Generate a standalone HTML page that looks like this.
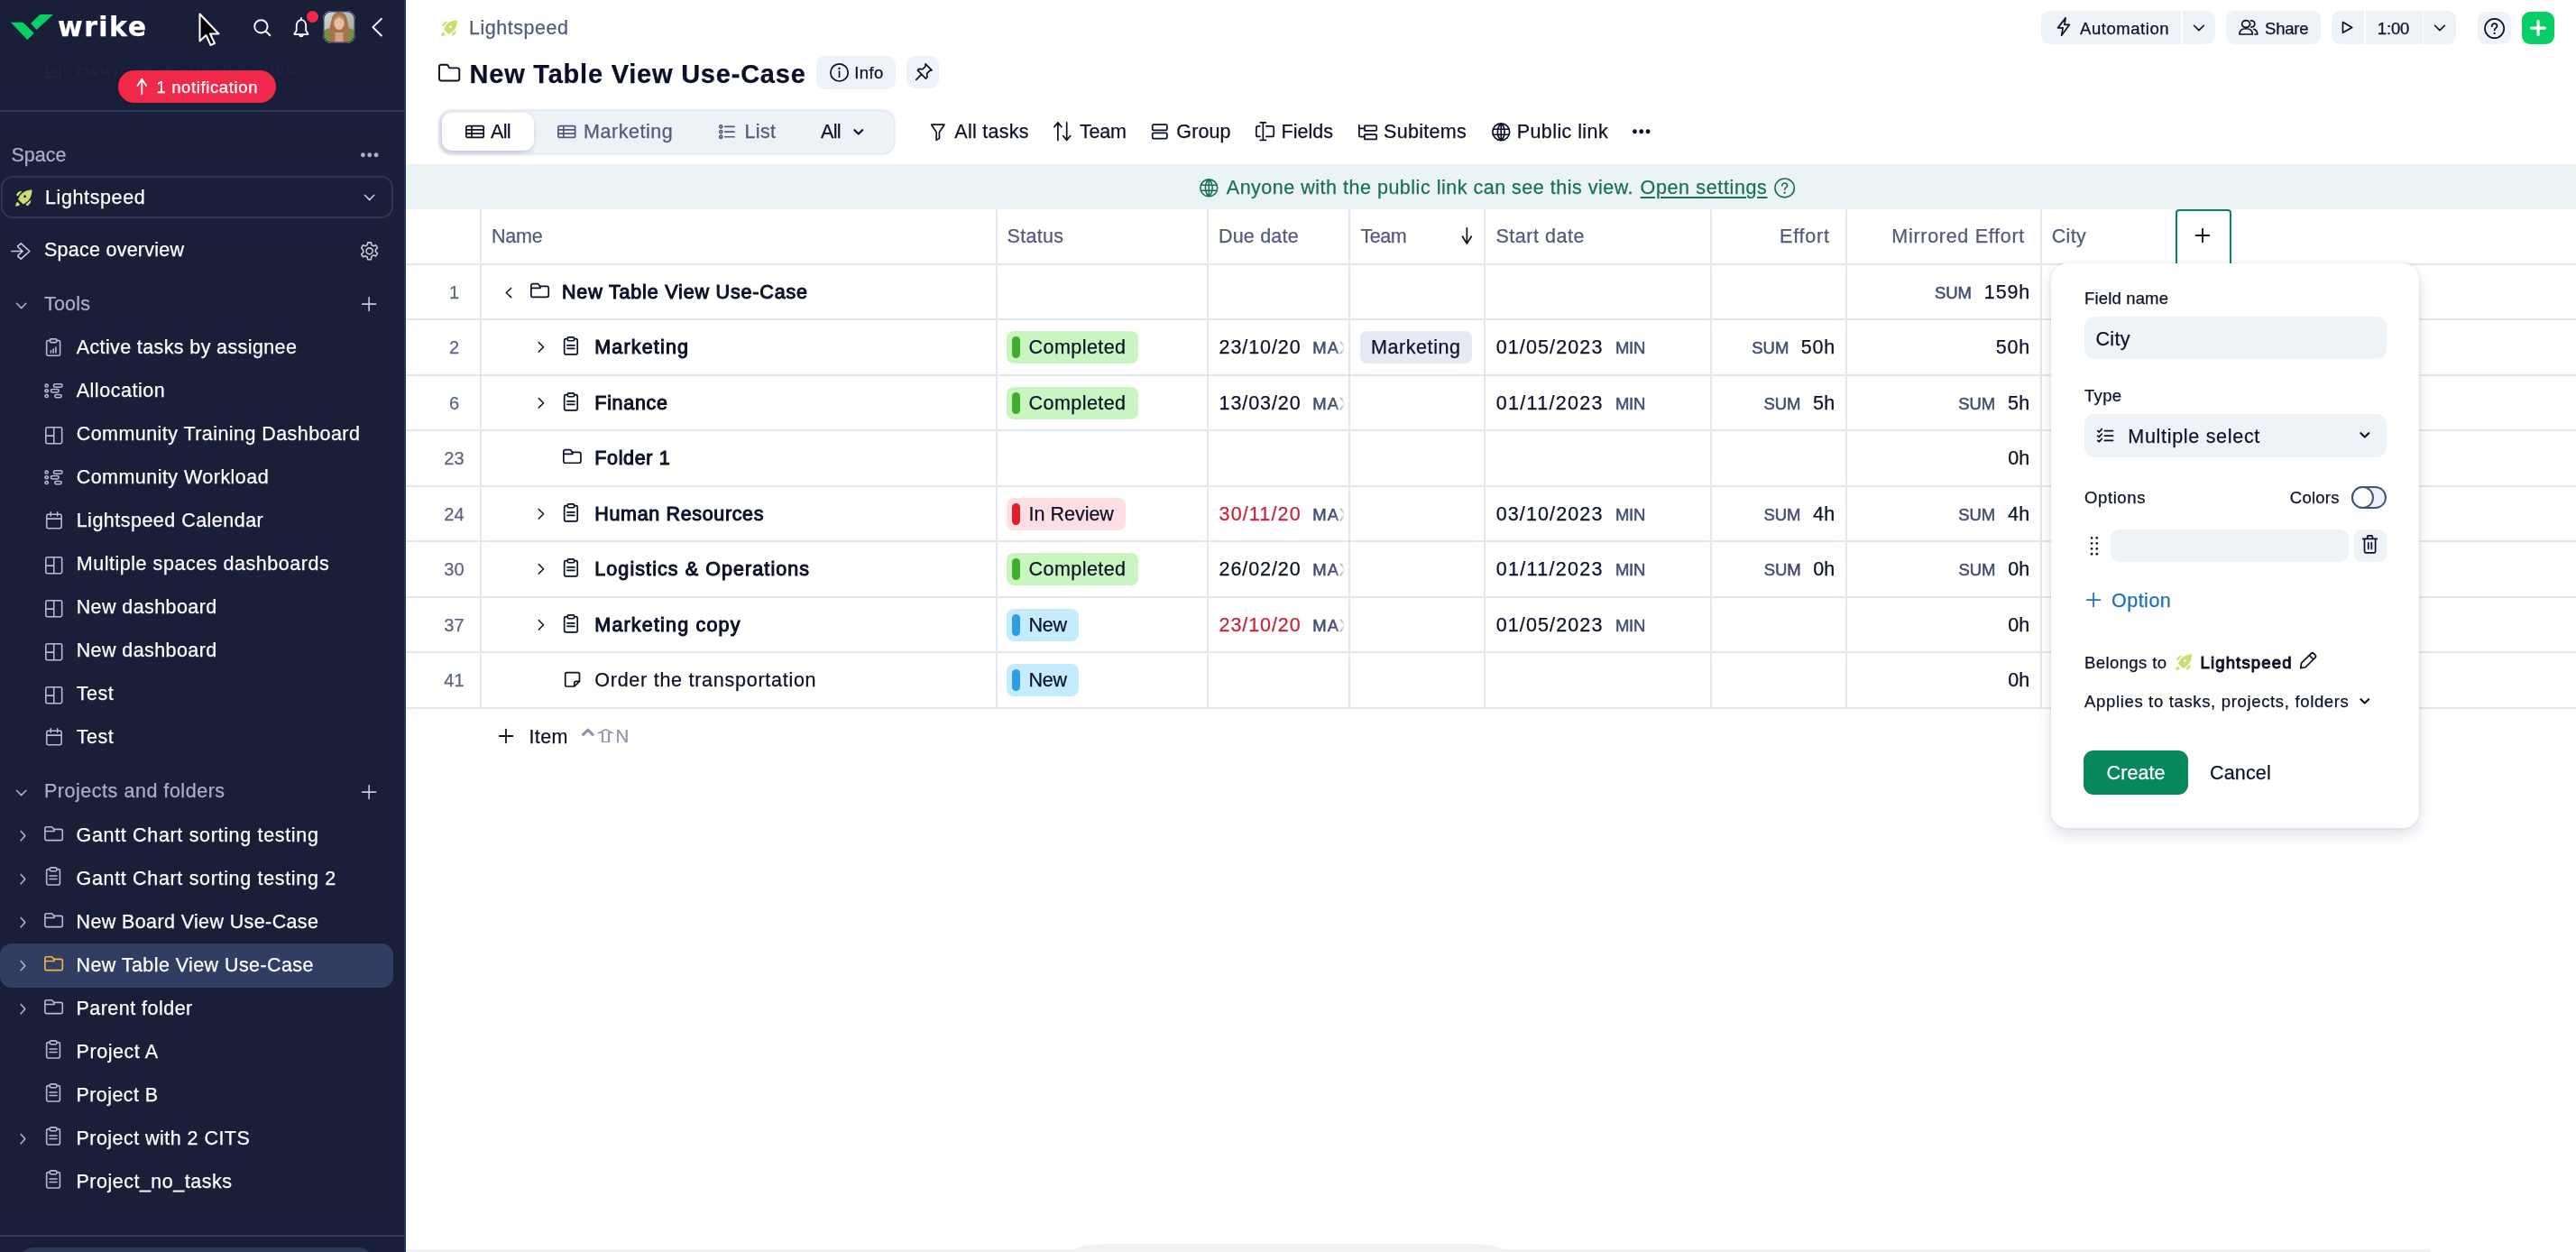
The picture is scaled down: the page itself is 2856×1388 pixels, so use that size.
<!DOCTYPE html>
<html lang="en">
<head>
<meta charset="utf-8">
<title>New Table View Use-Case - Wrike</title>
<style>
html,body{margin:0;padding:0;}
body{width:2856px;height:1388px;overflow:hidden;background:#fff;position:relative;font-family:"Liberation Sans",sans-serif;}
.main,.table,.popup,.sidebar{position:absolute;left:0;top:0;width:2856px;height:1388px;overflow:hidden;will-change:transform;}
.sidebar{width:450px;}
.sbg{position:absolute;left:0;top:0;width:450px;height:1388px;background:#191e39;}
.t{position:absolute;white-space:pre;-webkit-text-stroke-width:0.25px;}
.b{position:absolute;box-sizing:border-box;}
.i{position:absolute;overflow:visible;}
.u{text-decoration:underline;text-decoration-thickness:1.5px;text-underline-offset:3px;}

</style>
</head>
<body>
<div class="sbg"></div>
<main class="main">
<svg class="i" style="left:488.5px;top:22px;width:18.5px;height:18.5px" viewBox="0 0 24 24"><path fill-rule="evenodd" fill="#cfdd6e" d="M23.300 0.500C17 0.500 10.500 3 6.800 8.300L3.800 13.800L11 20.800L15.500 18C21 14 23.500 7 23.300 0.500ZM13.400 8a1.900 1.900 0 1 0 .01 0ZM1 7.500L4.500 3.500Q7 2 9.500 2.200L3.500 9.500ZM14.500 21L21.700 14.500Q22 17.500 20.500 20L17 23.500ZM0.300 23.700Q0.300 19 3 17.500L6.500 21Q5 23.700 0.300 23.700Z"/></svg>
<span class="t" style="left:520.0px;top:21px;font-size:21.5px;line-height:21.5px;color:#505b7b;letter-spacing:0.53px;">Lightspeed</span>
<svg class="i" style="left:485.7px;top:70.9px;width:24.3px;height:19.3px;color:#0c1129;stroke-width:1.9;" viewBox="0 0 24 24" preserveAspectRatio="none"><path d="M1 3.500Q1 1 3.500 1H8.500Q10 1 10.500 2L12 5.500H20.500Q23 5.500 23 8V20.500Q23 23 20.500 23H3.500Q1 23 1 20.500z" fill="none" stroke="currentColor" stroke-linecap="round" stroke-linejoin="round" vector-effect="non-scaling-stroke" /></svg>
<span class="t" style="left:520.5px;top:68px;font-size:29px;line-height:29px;color:#0a0f2a;letter-spacing:0.78px;font-weight:700;">New Table View Use-Case</span>
<div class="b" style="left:905.0px;top:62.0px;width:88.0px;height:37.0px;background:#eef3f7;border-radius:9px;"></div>
<svg class="i" style="left:919.5px;top:69.6px;width:21.1px;height:20.9px;color:#0c1129;stroke-width:1.7;" viewBox="0 0 24 24" preserveAspectRatio="none"><path d="M12 1a11 11 0 1 0 0 22a11 11 0 1 0 0-22zM12 10.500v7" fill="none" stroke="currentColor" stroke-linecap="round" stroke-linejoin="round" vector-effect="non-scaling-stroke" /><path d="M12 5.300a1.400 1.400 0 1 0 .01 0z" fill="currentColor" stroke="none" /></svg>
<span class="t" style="left:947.3px;top:72px;font-size:18.5px;line-height:18.5px;color:#0c1129;letter-spacing:0.38px;">Info</span>
<div class="b" style="left:1005.0px;top:62.0px;width:36.0px;height:36.0px;background:#eef3f7;border-radius:9px;"></div>
<svg class="i" style="left:1015.1px;top:69.9px;width:18.9px;height:19.1px;color:#0c1129;stroke-width:1.7;" viewBox="0 0 24 24" preserveAspectRatio="none"><path d="M14 1l9 9l-3 .5l-4 4l.500 5l-2 2L3 10l2-2l5 .500l4-4zM8.500 15.500L1 23" fill="none" stroke="currentColor" stroke-linecap="round" stroke-linejoin="round" vector-effect="non-scaling-stroke" /></svg>
<div class="b" style="left:2263.0px;top:12.0px;width:155.0px;height:36.5px;background:#eef3f7;border-radius:9px 0 0 9px;"></div>
<svg class="i" style="left:2280.8px;top:19.0px;width:14.0px;height:21.1px;color:#0c1129;stroke-width:1.7;" viewBox="0 0 24 24" preserveAspectRatio="none"><path d="M15.500 1L1 13.500h9.500L8 23L23 9.500h-9.500z" fill="none" stroke="currentColor" stroke-linecap="round" stroke-linejoin="round" vector-effect="non-scaling-stroke" /></svg>
<span class="t" style="left:2306.0px;top:23px;font-size:18.5px;line-height:18.5px;color:#0c1129;letter-spacing:0.56px;">Automation</span>
<div class="b" style="left:2420.0px;top:12.0px;width:35.5px;height:36.5px;background:#eef3f7;border-radius:0 9px 9px 0;"></div>
<svg class="i" style="left:2432.3px;top:28.1px;width:11.9px;height:5.9px;color:#0c1129;stroke-width:1.6;" viewBox="0 0 24 24" preserveAspectRatio="none"><path d="M1 1L12 23L23 1" fill="none" stroke="currentColor" stroke-linecap="round" stroke-linejoin="round" vector-effect="non-scaling-stroke" /></svg>
<div class="b" style="left:2468.0px;top:12.0px;width:104.5px;height:36.5px;background:#eef3f7;border-radius:9px;"></div>
<svg class="i" style="left:2481.9px;top:21.7px;width:21.6px;height:16.7px;color:#0c1129;stroke-width:1.7;" viewBox="0 0 24 24" preserveAspectRatio="none"><path d="M9 1a5 5.500 0 1 0 .01 0zM1 23c0-5.500 2.500-9 8-9s8 3.500 8 9zM15 1.200c3 0 4.800 2.300 4.800 5.300s-1.800 5-4.300 5.200M18.500 14.800c3 1 4.500 3.700 4.500 8.200h-3" fill="none" stroke="currentColor" stroke-linecap="round" stroke-linejoin="round" vector-effect="non-scaling-stroke" /></svg>
<span class="t" style="left:2511.0px;top:23px;font-size:18.5px;line-height:18.5px;color:#0c1129;letter-spacing:-0.19px;">Share</span>
<div class="b" style="left:2585.0px;top:12.0px;width:36.0px;height:36.5px;background:#eef3f7;border-radius:9px 0 0 9px;"></div>
<svg class="i" style="left:2597.4px;top:23.8px;width:11.2px;height:12.9px;color:#0c1129;stroke-width:1.7;" viewBox="0 0 24 24" preserveAspectRatio="none"><path d="M1 1L23 12L1 23z" fill="none" stroke="currentColor" stroke-linecap="round" stroke-linejoin="round" vector-effect="non-scaling-stroke" /></svg>
<div class="b" style="left:2623.0px;top:12.0px;width:62.5px;height:36.5px;background:#eef3f7;"></div>
<span class="t" style="left:2635.8px;top:23px;font-size:18.5px;line-height:18.5px;color:#0c1129;letter-spacing:-0.14px;">1:00</span>
<div class="b" style="left:2687.0px;top:12.0px;width:35.5px;height:36.5px;background:#eef3f7;border-radius:0 9px 9px 0;"></div>
<svg class="i" style="left:2699.3px;top:28.1px;width:11.9px;height:5.9px;color:#0c1129;stroke-width:1.6;" viewBox="0 0 24 24" preserveAspectRatio="none"><path d="M1 1L12 23L23 1" fill="none" stroke="currentColor" stroke-linecap="round" stroke-linejoin="round" vector-effect="non-scaling-stroke" /></svg>
<div class="b" style="left:2747.0px;top:13.0px;width:37.0px;height:35.5px;background:#eef3f7;border-radius:9px;"></div>
<svg class="i" style="left:2753.9px;top:20.4px;width:23.2px;height:23.2px;color:#0c1129;stroke-width:1.7;" viewBox="0 0 24 24" preserveAspectRatio="none"><path d="M12 1a11 11 0 1 0 0 22a11 11 0 1 0 0-22zM9 9.500c0-2 1.300-3.200 3-3.200s3 1.200 3 2.900c0 2.300-3 2.300-3 4.800" fill="none" stroke="currentColor" stroke-linecap="round" stroke-linejoin="round" vector-effect="non-scaling-stroke" /><path d="M12 16.300a1.200 1.200 0 1 0 .01 0z" fill="currentColor" stroke="none" /></svg>
<div class="b" style="left:2796.0px;top:13.0px;width:36.0px;height:35.5px;background:#08cf65;border-radius:9px;"></div>
<svg class="i" style="left:2805.9px;top:22.9px;width:16.1px;height:16.1px;color:#ffffff;stroke-width:3.2;" viewBox="0 0 24 24" preserveAspectRatio="none"><path d="M12 1v22M1 12h22" fill="none" stroke="currentColor" stroke-linecap="round" stroke-linejoin="round" vector-effect="non-scaling-stroke" /></svg>
<div class="b" style="left:487.5px;top:123.0px;width:503.0px;height:47.0px;background:#edf2f6;border-radius:13px;box-shadow:0 0 3px 1px rgba(196,204,224,.75);"></div>
<div class="b" style="left:489.5px;top:125.0px;width:102.5px;height:42.0px;background:#fff;border-radius:11px;box-shadow:-1px 2px 5px rgba(40,50,100,.25);"></div>
<svg class="i" style="left:515.5px;top:139.3px;width:21.1px;height:14.0px;color:#0c1129;stroke-width:1.7;" viewBox="0 0 24 24" preserveAspectRatio="none"><path d="M3.500 1H20.500Q23 1 23 3.500V20.500Q23 23 20.500 23H3.500Q1 23 1 20.500V3.500Q1 1 3.500 1zM1 8.300h22M1 15.700h22M8 1v22" fill="none" stroke="currentColor" stroke-linecap="round" stroke-linejoin="round" vector-effect="non-scaling-stroke" /></svg>
<span class="t" style="left:544.0px;top:136px;font-size:21.5px;line-height:21.5px;color:#0c1129;letter-spacing:-0.70px;">All</span>
<svg class="i" style="left:618.0px;top:139.3px;width:20.5px;height:14.0px;color:#505b7b;stroke-width:1.7;" viewBox="0 0 24 24" preserveAspectRatio="none"><path d="M3.500 1H20.500Q23 1 23 3.500V20.500Q23 23 20.500 23H3.500Q1 23 1 20.500V3.500Q1 1 3.500 1zM1 8.300h22M1 15.700h22M8 1v22" fill="none" stroke="currentColor" stroke-linecap="round" stroke-linejoin="round" vector-effect="non-scaling-stroke" /></svg>
<span class="t" style="left:647.0px;top:136px;font-size:21.5px;line-height:21.5px;color:#505b7b;letter-spacing:0.54px;">Marketing</span>
<svg class="i" style="left:797.1px;top:137.7px;width:17.8px;height:16.1px;color:#505b7b;stroke-width:1.7;" viewBox="0 0 24 24" preserveAspectRatio="none"><path d="M9 3.500h14M9 12h14M9 20.500h14M3 1.200a2 2.300 0 1 0 .01 0zM3 9.700a2 2.300 0 1 0 .01 0zM3 18.200a2 2.300 0 1 0 .01 0z" fill="none" stroke="currentColor" stroke-linecap="round" stroke-linejoin="round" vector-effect="non-scaling-stroke" /></svg>
<span class="t" style="left:825.5px;top:136px;font-size:21.5px;line-height:21.5px;color:#505b7b;letter-spacing:0.34px;">List</span>
<span class="t" style="left:910.0px;top:136px;font-size:21.5px;line-height:21.5px;color:#0c1129;letter-spacing:-0.70px;">All</span>
<svg class="i" style="left:947.2px;top:143.9px;width:9.6px;height:4.7px;color:#0c1129;stroke-width:2.2;" viewBox="0 0 24 24" preserveAspectRatio="none"><path d="M1 1L12 23L23 1" fill="none" stroke="currentColor" stroke-linecap="round" stroke-linejoin="round" vector-effect="non-scaling-stroke" /></svg>
<svg class="i" style="left:1031.5px;top:137.0px;width:15.6px;height:19.2px;color:#0c1129;stroke-width:1.7;" viewBox="0 0 24 24" preserveAspectRatio="none"><path d="M1 1.500h22L14.500 12v8.500L9.500 23V12z" fill="none" stroke="currentColor" stroke-linecap="round" stroke-linejoin="round" vector-effect="non-scaling-stroke" /></svg>
<span class="t" style="left:1058.3px;top:136px;font-size:21.5px;line-height:21.5px;color:#0c1129;letter-spacing:0.28px;">All tasks</span>
<svg class="i" style="left:1168.3px;top:135.3px;width:19.6px;height:21.3px;color:#0c1129;stroke-width:1.7;" viewBox="0 0 24 24" preserveAspectRatio="none"><path d="M6 23V1.500M1 6.500L6 1l5 5.500M18 1v21.500M13 17.500l5 5.500l5-5.500" fill="none" stroke="currentColor" stroke-linecap="round" stroke-linejoin="round" vector-effect="non-scaling-stroke" /></svg>
<span class="t" style="left:1197.0px;top:136px;font-size:21.5px;line-height:21.5px;color:#0c1129;letter-spacing:-0.19px;">Team</span>
<svg class="i" style="left:1277.3px;top:137.1px;width:17.6px;height:17.8px;color:#0c1129;stroke-width:1.7;" viewBox="0 0 24 24" preserveAspectRatio="none"><path d="M3 1.500H21Q23 1.500 23 3.500V8Q23 10 21 10H3Q1 10 1 8V3.500Q1 1.500 3 1.500zM3 14H21Q23 14 23 16V20.500Q23 22.500 21 22.500H3Q1 22.500 1 20.500V16Q1 14 3 14z" fill="none" stroke="currentColor" stroke-linecap="round" stroke-linejoin="round" vector-effect="non-scaling-stroke" /></svg>
<span class="t" style="left:1304.3px;top:136px;font-size:21.5px;line-height:21.5px;color:#0c1129;letter-spacing:0.11px;">Group</span>
<svg class="i" style="left:1391.5px;top:135.3px;width:21.1px;height:21.3px;color:#0c1129;stroke-width:1.7;" viewBox="0 0 24 24" preserveAspectRatio="none"><path d="M9.500 1v22M6 1h7M6 23h7M5.500 5.500H3Q1 5.500 1 7.500V16.500Q1 18.500 3 18.500H5.500M13.500 5.500H21Q23 5.500 23 7.500V16.500Q23 18.500 21 18.500H13.500" fill="none" stroke="currentColor" stroke-linecap="round" stroke-linejoin="round" vector-effect="non-scaling-stroke" /></svg>
<span class="t" style="left:1420.5px;top:136px;font-size:21.5px;line-height:21.5px;color:#0c1129;letter-spacing:0.03px;">Fields</span>
<svg class="i" style="left:1505.5px;top:137.6px;width:21.1px;height:17.2px;color:#0c1129;stroke-width:1.7;" viewBox="0 0 24 24" preserveAspectRatio="none"><path d="M1 1v16.500Q1 19 2.500 19H8M1 6h7M8 2H21.500Q23 2 23 3.500V8Q23 9.500 21.500 9.500H8zM8 15.500H21.500Q23 15.500 23 17V21.500Q23 23 21.500 23H8z" fill="none" stroke="currentColor" stroke-linecap="round" stroke-linejoin="round" vector-effect="non-scaling-stroke" /></svg>
<span class="t" style="left:1534.0px;top:136px;font-size:21.5px;line-height:21.5px;color:#0c1129;letter-spacing:0.31px;">Subitems</span>
<svg class="i" style="left:1653.5px;top:135.5px;width:20.5px;height:20.5px;color:#0c1129;stroke-width:1.7;" viewBox="0 0 24 24" preserveAspectRatio="none"><path d="M12 1a11 11 0 1 0 0 22a11 11 0 1 0 0-22zM1.500 8.500h21M1.500 15.500h21M12 1c-6 5-6 17 0 22M12 1c6 5 6 17 0 22M12 1v22" fill="none" stroke="currentColor" stroke-linecap="round" stroke-linejoin="round" vector-effect="non-scaling-stroke" /></svg>
<span class="t" style="left:1681.7px;top:136px;font-size:21.5px;line-height:21.5px;color:#0c1129;letter-spacing:0.42px;">Public link</span>
<svg class="i" style="left:1809.5px;top:135.5px;width:19.5px;height:19.5px;color:#0c1129;stroke-width:0;" viewBox="0 0 24 24" preserveAspectRatio="none"><path d="M3 9a3 3 0 1 0 .01 0zM12 9a3 3 0 1 0 .01 0zM21 9a3 3 0 1 0 .01 0z" fill="currentColor" stroke="none" /></svg>
<div class="b" style="left:450.0px;top:182.0px;width:2406.0px;height:50.0px;background:#ebf3f5;"></div>
<svg class="i" style="left:1329.9px;top:197.9px;width:20.6px;height:20.6px;color:#17705c;stroke-width:1.6;" viewBox="0 0 24 24" preserveAspectRatio="none"><path d="M12 1a11 11 0 1 0 0 22a11 11 0 1 0 0-22zM1.500 8.500h21M1.500 15.500h21M12 1c-6 5-6 17 0 22M12 1c6 5 6 17 0 22M12 1v22" fill="none" stroke="currentColor" stroke-linecap="round" stroke-linejoin="round" vector-effect="non-scaling-stroke" /></svg>
<span class="t" style="left:1359.8px;top:198px;font-size:21.5px;line-height:21.5px;color:#17705c;letter-spacing:0.51px;">Anyone with the public link can see this view.</span>
<span class="t u" style="left:1818.6px;top:198px;font-size:21.5px;line-height:21.5px;color:#17705c;letter-spacing:0.63px;">Open settings</span>
<svg class="i" style="left:1966.8px;top:196.9px;width:23.3px;height:22.8px;color:#17705c;stroke-width:1.6;" viewBox="0 0 24 24" preserveAspectRatio="none"><path d="M12 1a11 11 0 1 0 0 22a11 11 0 1 0 0-22zM9 9.500c0-2 1.300-3.200 3-3.200s3 1.200 3 2.900c0 2.300-3 2.300-3 4.800" fill="none" stroke="currentColor" stroke-linecap="round" stroke-linejoin="round" vector-effect="non-scaling-stroke" /><path d="M12 16.300a1.200 1.200 0 1 0 .01 0z" fill="currentColor" stroke="none" /></svg>
<div class="b" style="left:450.0px;top:1384.5px;width:2245.0px;height:3.5px;background:#f0f1f3;"></div>
<div class="b" style="left:1190.0px;top:1379.0px;width:478.0px;height:31.0px;background:#f1f2f4;border-radius:40px / 8px;"></div>
</main>
<section class="table">
<div class="b" style="left:450.0px;top:292.0px;width:2406.0px;height:2.0px;background:#e2e6f0;"></div>
<div class="b" style="left:450.0px;top:353.0px;width:2406.0px;height:2.0px;background:#e2e6f0;"></div>
<div class="b" style="left:450.0px;top:415.0px;width:2406.0px;height:2.0px;background:#e2e6f0;"></div>
<div class="b" style="left:450.0px;top:476.0px;width:2406.0px;height:2.0px;background:#e2e6f0;"></div>
<div class="b" style="left:450.0px;top:538.0px;width:2406.0px;height:2.0px;background:#e2e6f0;"></div>
<div class="b" style="left:450.0px;top:599.0px;width:2406.0px;height:2.0px;background:#e2e6f0;"></div>
<div class="b" style="left:450.0px;top:661.0px;width:2406.0px;height:2.0px;background:#e2e6f0;"></div>
<div class="b" style="left:450.0px;top:722.0px;width:2406.0px;height:2.0px;background:#e2e6f0;"></div>
<div class="b" style="left:450.0px;top:784.0px;width:2406.0px;height:2.0px;background:#e2e6f0;"></div>
<div class="b" style="left:532.0px;top:232.0px;width:2.0px;height:554.0px;background:#e2e6f0;"></div>
<div class="b" style="left:1104.0px;top:232.0px;width:2.0px;height:554.0px;background:#e2e6f0;"></div>
<div class="b" style="left:1338.0px;top:232.0px;width:2.0px;height:554.0px;background:#e2e6f0;"></div>
<div class="b" style="left:1495.0px;top:232.0px;width:2.0px;height:554.0px;background:#e2e6f0;"></div>
<div class="b" style="left:1645.0px;top:232.0px;width:2.0px;height:554.0px;background:#e2e6f0;"></div>
<div class="b" style="left:1896.0px;top:232.0px;width:2.0px;height:554.0px;background:#e2e6f0;"></div>
<div class="b" style="left:2046.0px;top:232.0px;width:2.0px;height:554.0px;background:#e2e6f0;"></div>
<div class="b" style="left:2262.0px;top:232.0px;width:2.0px;height:554.0px;background:#e2e6f0;"></div>
<span class="t" style="left:545.0px;top:252px;font-size:21.5px;line-height:21.5px;color:#505b7b;letter-spacing:-0.25px;">Name</span>
<span class="t" style="left:1116.6px;top:252px;font-size:21.5px;line-height:21.5px;color:#505b7b;letter-spacing:0.29px;">Status</span>
<span class="t" style="left:1351.0px;top:252px;font-size:21.5px;line-height:21.5px;color:#505b7b;letter-spacing:0.19px;">Due date</span>
<span class="t" style="left:1508.4px;top:252px;font-size:21.5px;line-height:21.5px;color:#505b7b;letter-spacing:-0.43px;">Team</span>
<svg class="i" style="left:1620.9px;top:252.1px;width:10.7px;height:18.9px;color:#0c1129;stroke-width:1.7;" viewBox="0 0 24 24" preserveAspectRatio="none"><path d="M12 1V23M1 13L12 23L23 13" fill="none" stroke="currentColor" stroke-linecap="round" stroke-linejoin="round" vector-effect="non-scaling-stroke" /></svg>
<span class="t" style="left:1658.4px;top:252px;font-size:21.5px;line-height:21.5px;color:#505b7b;letter-spacing:0.53px;">Start date</span>
<span class="t" style="left:1973.0px;top:252px;font-size:21.5px;line-height:21.5px;color:#505b7b;letter-spacing:0.80px;">Effort</span>
<span class="t" style="left:2097.3px;top:252px;font-size:21.5px;line-height:21.5px;color:#505b7b;letter-spacing:0.71px;">Mirrored Effort</span>
<span class="t" style="left:2274.7px;top:252px;font-size:21.5px;line-height:21.5px;color:#505b7b;letter-spacing:0.32px;">City</span>
<div class="b" style="left:2412.0px;top:232.0px;width:62.0px;height:68.0px;background:#fff;border-radius:4px 4px 0 0;border:2px solid #0a8262;"></div>
<svg class="i" style="left:2434.2px;top:253.2px;width:16.0px;height:16.0px;color:#0c1129;stroke-width:1.8;" viewBox="0 0 24 24" preserveAspectRatio="none"><path d="M12 1v22M1 12h22" fill="none" stroke="currentColor" stroke-linecap="round" stroke-linejoin="round" vector-effect="non-scaling-stroke" /></svg>
<span class="t" style="left:497.9px;top:314px;font-size:20.0px;line-height:20.0px;color:#5a6585;letter-spacing:0.18px;">1</span>
<svg class="i" style="left:560.8px;top:318.8px;width:5.9px;height:11.1px;color:#0c1129;stroke-width:1.5;" viewBox="0 0 24 24" preserveAspectRatio="none"><path d="M23 1L1 12L23 23" fill="none" stroke="currentColor" stroke-linecap="round" stroke-linejoin="round" vector-effect="non-scaling-stroke" /></svg>
<svg class="i" style="left:587.5px;top:314.2px;width:21.1px;height:16.1px;color:#0c1129;stroke-width:1.7;" viewBox="0 0 24 24" preserveAspectRatio="none"><path d="M1 3.500Q1 1 3.500 1H8.500Q10 1 10.500 2L12 5H20.500Q23 5 23 7.500V20.500Q23 23 20.500 23H3.500Q1 23 1 20.500zM1 8h11.500L12 5" fill="none" stroke="currentColor" stroke-linecap="round" stroke-linejoin="round" vector-effect="non-scaling-stroke" /></svg>
<span class="t" style="left:623.0px;top:314px;font-size:21.5px;line-height:21.5px;color:#0c1129;letter-spacing:0.83px;-webkit-text-stroke:1.0px #0c1129;">New Table View Use-Case</span>
<span class="t" style="left:2199.8px;top:314px;font-size:21.5px;line-height:21.5px;color:#0c1129;letter-spacing:0.89px;">159h</span>
<span class="t" style="left:2145.0px;top:316px;font-size:18.5px;line-height:18.5px;color:#414d72;letter-spacing:-0.06px;-webkit-text-stroke:0.5px #414d72;">SUM</span>
<span class="t" style="left:497.9px;top:375px;font-size:20.0px;line-height:20.0px;color:#5a6585;letter-spacing:0.18px;">2</span>
<svg class="i" style="left:597.2px;top:379.3px;width:5.8px;height:11.5px;color:#0c1129;stroke-width:1.5;" viewBox="0 0 24 24" preserveAspectRatio="none"><path d="M1 1L23 12L1 23" fill="none" stroke="currentColor" stroke-linecap="round" stroke-linejoin="round" vector-effect="non-scaling-stroke" /></svg>
<svg class="i" style="left:625.4px;top:373.0px;width:15.9px;height:20.7px;color:#0c1129;stroke-width:1.7;" viewBox="0 0 24 24" preserveAspectRatio="none"><path d="M6.500 3H3.500Q1 3 1 5.500V20.500Q1 23 3.500 23H20.500Q23 23 23 20.500V5.500Q23 3 20.500 3H17.500M8 1H16Q17.500 1 17.500 2.500V4Q17.500 5.500 16 5.500H8Q6.500 5.500 6.500 4V2.500Q6.500 1 8 1zM6 11.500h12M6 15.500h12" fill="none" stroke="currentColor" stroke-linecap="round" stroke-linejoin="round" vector-effect="non-scaling-stroke" /></svg>
<span class="t" style="left:659.3px;top:375px;font-size:21.5px;line-height:21.5px;color:#0c1129;letter-spacing:1.16px;-webkit-text-stroke:1.0px #0c1129;">Marketing</span>
<div class="b" style="left:1116.0px;top:367.0px;width:146.0px;height:36.0px;background:#c8f5c0;border-radius:8px;"></div>
<div class="b" style="left:1122.0px;top:373.0px;width:9.0px;height:24.0px;background:#3fae2f;border-radius:4.5px;"></div>
<span class="t" style="left:1140.5px;top:375px;font-size:21.5px;line-height:21.5px;color:#0c1129;letter-spacing:0.45px;">Completed</span>
<span class="t" style="left:1351.6px;top:375px;font-size:21.5px;line-height:21.5px;color:#0c1129;letter-spacing:0.90px;">23/10/20</span>
<span class="t" style="left:1455.3px;top:377px;font-size:18.5px;line-height:18.5px;color:#414d72;letter-spacing:0.95px;-webkit-text-stroke:0.5px #414d72;width:36px;overflow:hidden;-webkit-mask-image:linear-gradient(90deg,#000 70%,transparent);">MAX</span>
<div class="b" style="left:1508.0px;top:367.0px;width:124.0px;height:36.0px;background:#e6eaf3;border-radius:8px;"></div>
<span class="t" style="left:1520.0px;top:375px;font-size:21.5px;line-height:21.5px;color:#0c1129;letter-spacing:0.57px;">Marketing</span>
<span class="t" style="left:1658.7px;top:375px;font-size:21.5px;line-height:21.5px;color:#0c1129;letter-spacing:1.12px;">01/05/2023</span>
<span class="t" style="left:1790.9px;top:377px;font-size:18.5px;line-height:18.5px;color:#414d72;letter-spacing:-0.26px;-webkit-text-stroke:0.5px #414d72;">MIN</span>
<span class="t" style="left:1996.8px;top:375px;font-size:21.5px;line-height:21.5px;color:#0c1129;letter-spacing:0.81px;">50h</span>
<span class="t" style="left:1942.3px;top:377px;font-size:18.5px;line-height:18.5px;color:#414d72;letter-spacing:-0.06px;-webkit-text-stroke:0.5px #414d72;">SUM</span>
<span class="t" style="left:2212.8px;top:375px;font-size:21.5px;line-height:21.5px;color:#0c1129;letter-spacing:0.81px;">50h</span>
<span class="t" style="left:497.9px;top:437px;font-size:20.0px;line-height:20.0px;color:#5a6585;letter-spacing:0.18px;">6</span>
<svg class="i" style="left:597.2px;top:441.3px;width:5.8px;height:11.5px;color:#0c1129;stroke-width:1.5;" viewBox="0 0 24 24" preserveAspectRatio="none"><path d="M1 1L23 12L1 23" fill="none" stroke="currentColor" stroke-linecap="round" stroke-linejoin="round" vector-effect="non-scaling-stroke" /></svg>
<svg class="i" style="left:625.4px;top:435.0px;width:15.9px;height:20.7px;color:#0c1129;stroke-width:1.7;" viewBox="0 0 24 24" preserveAspectRatio="none"><path d="M6.500 3H3.500Q1 3 1 5.500V20.500Q1 23 3.500 23H20.500Q23 23 23 20.500V5.500Q23 3 20.500 3H17.500M8 1H16Q17.500 1 17.500 2.500V4Q17.500 5.500 16 5.500H8Q6.500 5.500 6.500 4V2.500Q6.500 1 8 1zM6 11.500h12M6 15.500h12" fill="none" stroke="currentColor" stroke-linecap="round" stroke-linejoin="round" vector-effect="non-scaling-stroke" /></svg>
<span class="t" style="left:659.3px;top:437px;font-size:21.5px;line-height:21.5px;color:#0c1129;letter-spacing:0.70px;-webkit-text-stroke:1.0px #0c1129;">Finance</span>
<div class="b" style="left:1116.0px;top:429.0px;width:146.0px;height:36.0px;background:#c8f5c0;border-radius:8px;"></div>
<div class="b" style="left:1122.0px;top:435.0px;width:9.0px;height:24.0px;background:#3fae2f;border-radius:4.5px;"></div>
<span class="t" style="left:1140.5px;top:437px;font-size:21.5px;line-height:21.5px;color:#0c1129;letter-spacing:0.45px;">Completed</span>
<span class="t" style="left:1351.6px;top:437px;font-size:21.5px;line-height:21.5px;color:#0c1129;letter-spacing:0.90px;">13/03/20</span>
<span class="t" style="left:1455.3px;top:439px;font-size:18.5px;line-height:18.5px;color:#414d72;letter-spacing:0.95px;-webkit-text-stroke:0.5px #414d72;width:36px;overflow:hidden;-webkit-mask-image:linear-gradient(90deg,#000 70%,transparent);">MAX</span>
<span class="t" style="left:1658.7px;top:437px;font-size:21.5px;line-height:21.5px;color:#0c1129;letter-spacing:1.30px;">01/11/2023</span>
<span class="t" style="left:1790.9px;top:439px;font-size:18.5px;line-height:18.5px;color:#414d72;letter-spacing:-0.26px;-webkit-text-stroke:0.5px #414d72;">MIN</span>
<span class="t" style="left:2010.0px;top:437px;font-size:21.5px;line-height:21.5px;color:#0c1129;letter-spacing:0.38px;">5h</span>
<span class="t" style="left:1955.5px;top:439px;font-size:18.5px;line-height:18.5px;color:#414d72;letter-spacing:-0.06px;-webkit-text-stroke:0.5px #414d72;">SUM</span>
<span class="t" style="left:2226.0px;top:437px;font-size:21.5px;line-height:21.5px;color:#0c1129;letter-spacing:0.38px;">5h</span>
<span class="t" style="left:2171.2px;top:439px;font-size:18.5px;line-height:18.5px;color:#414d72;letter-spacing:-0.06px;-webkit-text-stroke:0.5px #414d72;">SUM</span>
<span class="t" style="left:492.3px;top:498px;font-size:20.0px;line-height:20.0px;color:#5a6585;letter-spacing:0.18px;">23</span>
<svg class="i" style="left:623.5px;top:498.4px;width:20.8px;height:15.9px;color:#0c1129;stroke-width:1.7;" viewBox="0 0 24 24" preserveAspectRatio="none"><path d="M1 3.500Q1 1 3.500 1H8.500Q10 1 10.500 2L12 5H20.500Q23 5 23 7.500V20.500Q23 23 20.500 23H3.500Q1 23 1 20.500zM1 8h11.500L12 5" fill="none" stroke="currentColor" stroke-linecap="round" stroke-linejoin="round" vector-effect="non-scaling-stroke" /></svg>
<span class="t" style="left:659.3px;top:498px;font-size:21.5px;line-height:21.5px;color:#0c1129;letter-spacing:0.65px;-webkit-text-stroke:1.0px #0c1129;">Folder 1</span>
<span class="t" style="left:2226.2px;top:498px;font-size:21.5px;line-height:21.5px;color:#0c1129;letter-spacing:0.18px;">0h</span>
<span class="t" style="left:492.3px;top:560px;font-size:20.0px;line-height:20.0px;color:#5a6585;letter-spacing:0.18px;">24</span>
<svg class="i" style="left:597.2px;top:564.3px;width:5.8px;height:11.5px;color:#0c1129;stroke-width:1.5;" viewBox="0 0 24 24" preserveAspectRatio="none"><path d="M1 1L23 12L1 23" fill="none" stroke="currentColor" stroke-linecap="round" stroke-linejoin="round" vector-effect="non-scaling-stroke" /></svg>
<svg class="i" style="left:625.4px;top:558.0px;width:15.9px;height:20.7px;color:#0c1129;stroke-width:1.7;" viewBox="0 0 24 24" preserveAspectRatio="none"><path d="M6.500 3H3.500Q1 3 1 5.500V20.500Q1 23 3.500 23H20.500Q23 23 23 20.500V5.500Q23 3 20.500 3H17.500M8 1H16Q17.500 1 17.500 2.500V4Q17.500 5.500 16 5.500H8Q6.500 5.500 6.500 4V2.500Q6.500 1 8 1zM6 11.500h12M6 15.500h12" fill="none" stroke="currentColor" stroke-linecap="round" stroke-linejoin="round" vector-effect="non-scaling-stroke" /></svg>
<span class="t" style="left:659.3px;top:560px;font-size:21.5px;line-height:21.5px;color:#0c1129;letter-spacing:0.65px;-webkit-text-stroke:1.0px #0c1129;">Human Resources</span>
<div class="b" style="left:1116.0px;top:552.0px;width:132.0px;height:36.0px;background:#ffdfe3;border-radius:8px;"></div>
<div class="b" style="left:1122.0px;top:558.0px;width:9.0px;height:24.0px;background:#e11d2e;border-radius:4.5px;"></div>
<span class="t" style="left:1140.5px;top:560px;font-size:21.5px;line-height:21.5px;color:#0c1129;letter-spacing:-0.00px;">In Review</span>
<span class="t" style="left:1351.6px;top:560px;font-size:21.5px;line-height:21.5px;color:#c8233a;letter-spacing:1.13px;">30/11/20</span>
<span class="t" style="left:1455.3px;top:562px;font-size:18.5px;line-height:18.5px;color:#414d72;letter-spacing:0.95px;-webkit-text-stroke:0.5px #414d72;width:36px;overflow:hidden;-webkit-mask-image:linear-gradient(90deg,#000 70%,transparent);">MAX</span>
<span class="t" style="left:1658.7px;top:560px;font-size:21.5px;line-height:21.5px;color:#0c1129;letter-spacing:1.12px;">03/10/2023</span>
<span class="t" style="left:1790.9px;top:562px;font-size:18.5px;line-height:18.5px;color:#414d72;letter-spacing:-0.26px;-webkit-text-stroke:0.5px #414d72;">MIN</span>
<span class="t" style="left:2010.0px;top:560px;font-size:21.5px;line-height:21.5px;color:#0c1129;letter-spacing:0.38px;">4h</span>
<span class="t" style="left:1955.5px;top:562px;font-size:18.5px;line-height:18.5px;color:#414d72;letter-spacing:-0.06px;-webkit-text-stroke:0.5px #414d72;">SUM</span>
<span class="t" style="left:2226.0px;top:560px;font-size:21.5px;line-height:21.5px;color:#0c1129;letter-spacing:0.38px;">4h</span>
<span class="t" style="left:2171.2px;top:562px;font-size:18.5px;line-height:18.5px;color:#414d72;letter-spacing:-0.06px;-webkit-text-stroke:0.5px #414d72;">SUM</span>
<span class="t" style="left:492.3px;top:621px;font-size:20.0px;line-height:20.0px;color:#5a6585;letter-spacing:0.18px;">30</span>
<svg class="i" style="left:597.2px;top:625.3px;width:5.8px;height:11.5px;color:#0c1129;stroke-width:1.5;" viewBox="0 0 24 24" preserveAspectRatio="none"><path d="M1 1L23 12L1 23" fill="none" stroke="currentColor" stroke-linecap="round" stroke-linejoin="round" vector-effect="non-scaling-stroke" /></svg>
<svg class="i" style="left:625.4px;top:619.0px;width:15.9px;height:20.7px;color:#0c1129;stroke-width:1.7;" viewBox="0 0 24 24" preserveAspectRatio="none"><path d="M6.500 3H3.500Q1 3 1 5.500V20.500Q1 23 3.500 23H20.500Q23 23 23 20.500V5.500Q23 3 20.500 3H17.500M8 1H16Q17.500 1 17.500 2.500V4Q17.500 5.500 16 5.500H8Q6.500 5.500 6.500 4V2.500Q6.500 1 8 1zM6 11.500h12M6 15.500h12" fill="none" stroke="currentColor" stroke-linecap="round" stroke-linejoin="round" vector-effect="non-scaling-stroke" /></svg>
<span class="t" style="left:659.3px;top:621px;font-size:21.5px;line-height:21.5px;color:#0c1129;letter-spacing:1.08px;-webkit-text-stroke:1.0px #0c1129;">Logistics &amp; Operations</span>
<div class="b" style="left:1116.0px;top:613.0px;width:146.0px;height:36.0px;background:#c8f5c0;border-radius:8px;"></div>
<div class="b" style="left:1122.0px;top:619.0px;width:9.0px;height:24.0px;background:#3fae2f;border-radius:4.5px;"></div>
<span class="t" style="left:1140.5px;top:621px;font-size:21.5px;line-height:21.5px;color:#0c1129;letter-spacing:0.45px;">Completed</span>
<span class="t" style="left:1351.6px;top:621px;font-size:21.5px;line-height:21.5px;color:#0c1129;letter-spacing:0.90px;">26/02/20</span>
<span class="t" style="left:1455.3px;top:623px;font-size:18.5px;line-height:18.5px;color:#414d72;letter-spacing:0.95px;-webkit-text-stroke:0.5px #414d72;width:36px;overflow:hidden;-webkit-mask-image:linear-gradient(90deg,#000 70%,transparent);">MAX</span>
<span class="t" style="left:1658.7px;top:621px;font-size:21.5px;line-height:21.5px;color:#0c1129;letter-spacing:1.30px;">01/11/2023</span>
<span class="t" style="left:1790.9px;top:623px;font-size:18.5px;line-height:18.5px;color:#414d72;letter-spacing:-0.26px;-webkit-text-stroke:0.5px #414d72;">MIN</span>
<span class="t" style="left:2010.2px;top:621px;font-size:21.5px;line-height:21.5px;color:#0c1129;letter-spacing:0.18px;">0h</span>
<span class="t" style="left:1955.7px;top:623px;font-size:18.5px;line-height:18.5px;color:#414d72;letter-spacing:-0.06px;-webkit-text-stroke:0.5px #414d72;">SUM</span>
<span class="t" style="left:2226.2px;top:621px;font-size:21.5px;line-height:21.5px;color:#0c1129;letter-spacing:0.18px;">0h</span>
<span class="t" style="left:2171.4px;top:623px;font-size:18.5px;line-height:18.5px;color:#414d72;letter-spacing:-0.06px;-webkit-text-stroke:0.5px #414d72;">SUM</span>
<span class="t" style="left:492.3px;top:683px;font-size:20.0px;line-height:20.0px;color:#5a6585;letter-spacing:0.18px;">37</span>
<svg class="i" style="left:597.2px;top:687.3px;width:5.8px;height:11.5px;color:#0c1129;stroke-width:1.5;" viewBox="0 0 24 24" preserveAspectRatio="none"><path d="M1 1L23 12L1 23" fill="none" stroke="currentColor" stroke-linecap="round" stroke-linejoin="round" vector-effect="non-scaling-stroke" /></svg>
<svg class="i" style="left:625.4px;top:681.0px;width:15.9px;height:20.7px;color:#0c1129;stroke-width:1.7;" viewBox="0 0 24 24" preserveAspectRatio="none"><path d="M6.500 3H3.500Q1 3 1 5.500V20.500Q1 23 3.500 23H20.500Q23 23 23 20.500V5.500Q23 3 20.500 3H17.500M8 1H16Q17.500 1 17.500 2.500V4Q17.500 5.500 16 5.500H8Q6.500 5.500 6.500 4V2.500Q6.500 1 8 1zM6 11.500h12M6 15.500h12" fill="none" stroke="currentColor" stroke-linecap="round" stroke-linejoin="round" vector-effect="non-scaling-stroke" /></svg>
<span class="t" style="left:659.3px;top:683px;font-size:21.5px;line-height:21.5px;color:#0c1129;letter-spacing:1.18px;-webkit-text-stroke:1.0px #0c1129;">Marketing copy</span>
<div class="b" style="left:1116.0px;top:675.0px;width:79.5px;height:36.0px;background:#c5ecfd;border-radius:8px;"></div>
<div class="b" style="left:1122.0px;top:681.0px;width:9.0px;height:24.0px;background:#2f9ee0;border-radius:4.5px;"></div>
<span class="t" style="left:1140.5px;top:683px;font-size:21.5px;line-height:21.5px;color:#0c1129;letter-spacing:-0.26px;">New</span>
<span class="t" style="left:1351.6px;top:683px;font-size:21.5px;line-height:21.5px;color:#c8233a;letter-spacing:0.90px;">23/10/20</span>
<span class="t" style="left:1455.3px;top:685px;font-size:18.5px;line-height:18.5px;color:#414d72;letter-spacing:0.95px;-webkit-text-stroke:0.5px #414d72;width:36px;overflow:hidden;-webkit-mask-image:linear-gradient(90deg,#000 70%,transparent);">MAX</span>
<span class="t" style="left:1658.7px;top:683px;font-size:21.5px;line-height:21.5px;color:#0c1129;letter-spacing:1.12px;">01/05/2023</span>
<span class="t" style="left:1790.9px;top:685px;font-size:18.5px;line-height:18.5px;color:#414d72;letter-spacing:-0.26px;-webkit-text-stroke:0.5px #414d72;">MIN</span>
<span class="t" style="left:2226.2px;top:683px;font-size:21.5px;line-height:21.5px;color:#0c1129;letter-spacing:0.18px;">0h</span>
<span class="t" style="left:492.3px;top:744px;font-size:20.0px;line-height:20.0px;color:#5a6585;letter-spacing:0.18px;">41</span>
<svg class="i" style="left:625.6px;top:745.2px;width:17.2px;height:16.7px;color:#0c1129;stroke-width:1.7;" viewBox="0 0 24 24" preserveAspectRatio="none"><path d="M3.500 1H20.500Q23 1 23 3.500V15L15 23H3.500Q1 23 1 20.500V3.500Q1 1 3.500 1zM23 15h-5.500Q15 15 15 17.500V23" fill="none" stroke="currentColor" stroke-linecap="round" stroke-linejoin="round" vector-effect="non-scaling-stroke" /></svg>
<span class="t" style="left:659.3px;top:744px;font-size:21.5px;line-height:21.5px;color:#0c1129;letter-spacing:0.74px;">Order the transportation</span>
<div class="b" style="left:1116.0px;top:736.0px;width:79.5px;height:36.0px;background:#c5ecfd;border-radius:8px;"></div>
<div class="b" style="left:1122.0px;top:742.0px;width:9.0px;height:24.0px;background:#2f9ee0;border-radius:4.5px;"></div>
<span class="t" style="left:1140.5px;top:744px;font-size:21.5px;line-height:21.5px;color:#0c1129;letter-spacing:-0.26px;">New</span>
<span class="t" style="left:2226.2px;top:744px;font-size:21.5px;line-height:21.5px;color:#0c1129;letter-spacing:0.18px;">0h</span>
<svg class="i" style="left:552.7px;top:808.2px;width:16.0px;height:16.0px;color:#0c1129;stroke-width:1.8;" viewBox="0 0 24 24" preserveAspectRatio="none"><path d="M12 1v22M1 12h22" fill="none" stroke="currentColor" stroke-linecap="round" stroke-linejoin="round" vector-effect="non-scaling-stroke" /></svg>
<span class="t" style="left:586.5px;top:807px;font-size:21.5px;line-height:21.5px;color:#0c1129;letter-spacing:0.39px;">Item</span>
<span class="t" style="left:638.1px;top:804px;font-size:33px;line-height:33px;color:#8b94ad;font-family:'DejaVu Sans',sans-serif">⌃</span><span class="t" style="left:656.4px;top:807px;font-size:28px;line-height:28px;color:#8b94ad;font-family:'DejaVu Sans',sans-serif;transform:scale(1.31,0.714);transform-origin:0 0">⇧</span>
<span class="t" style="left:682.5px;top:806px;font-size:20.5px;line-height:20.5px;color:#8b94ad;letter-spacing:0.18px;">N</span>
</section>
<aside class="popup">
<div class="b" style="left:2274.0px;top:292.0px;width:408.0px;height:626.0px;background:#fff;border-radius:18px;box-shadow:0 7px 15px rgba(40,55,110,.15), 0 0 4px rgba(40,55,110,.10);"></div>
<span class="t" style="left:2311.0px;top:322px;font-size:18.5px;line-height:18.5px;color:#0c1129;letter-spacing:0.16px;">Field name</span>
<div class="b" style="left:2310.5px;top:351.0px;width:335.5px;height:46.8px;background:#eef3f7;border-radius:11px;"></div>
<span class="t" style="left:2323.5px;top:366px;font-size:21.5px;line-height:21.5px;color:#0c1129;letter-spacing:0.32px;">City</span>
<span class="t" style="left:2311.0px;top:430px;font-size:18.5px;line-height:18.5px;color:#0c1129;letter-spacing:0.30px;">Type</span>
<div class="b" style="left:2310.5px;top:459.0px;width:335.5px;height:48.3px;background:#eef3f7;border-radius:11px;"></div>
<svg class="i" style="left:2325.1px;top:475.2px;width:18.3px;height:16.1px;color:#0c1129;stroke-width:1.7;" viewBox="0 0 24 24" preserveAspectRatio="none"><path d="M11 4h12M11 12h12M11 20h12M1 4l2 2l4-5M1 12l2 2l4-5M1 20l2 2l4-5" fill="none" stroke="currentColor" stroke-linecap="round" stroke-linejoin="round" vector-effect="non-scaling-stroke" /></svg>
<span class="t" style="left:2359.3px;top:474px;font-size:21.5px;line-height:21.5px;color:#0c1129;letter-spacing:0.70px;">Multiple select</span>
<svg class="i" style="left:2617.2px;top:479.9px;width:9.6px;height:4.7px;color:#0c1129;stroke-width:2.2;" viewBox="0 0 24 24" preserveAspectRatio="none"><path d="M1 1L12 23L23 1" fill="none" stroke="currentColor" stroke-linecap="round" stroke-linejoin="round" vector-effect="non-scaling-stroke" /></svg>
<span class="t" style="left:2311.0px;top:543px;font-size:18.5px;line-height:18.5px;color:#0c1129;letter-spacing:0.61px;">Options</span>
<span class="t" style="left:2538.8px;top:543px;font-size:18.5px;line-height:18.5px;color:#0c1129;letter-spacing:0.25px;">Colors</span>
<div class="b" style="left:2607.2px;top:539.2px;width:38.8px;height:24.4px;background:#edf2f6;border-radius:12.5px;border:2px solid #46537b;"></div>
<div class="b" style="left:2607.2px;top:539.2px;width:24.4px;height:24.4px;background:#fff;border-radius:12.5px;border:2px solid #46537b;"></div>
<svg class="i" style="left:2316.8px;top:594.6px;width:9.8px;height:20.7px;color:#0c1129;stroke-width:0;" viewBox="0 0 24 24" preserveAspectRatio="none"><path d="M5 0a3.500 1.600 0 1 0 .01 0zM19 0a3.500 1.600 0 1 0 .01 0zM5 6.900a3.500 1.600 0 1 0 .01 0zM19 6.900a3.500 1.600 0 1 0 .01 0zM5 13.800a3.500 1.600 0 1 0 .01 0zM19 13.800a3.500 1.600 0 1 0 .01 0zM5 20.700a3.500 1.600 0 1 0 .01 0zM19 20.700a3.500 1.600 0 1 0 .01 0z" fill="currentColor" stroke="none" /></svg>
<div class="b" style="left:2340.0px;top:587.0px;width:264.0px;height:35.5px;background:#eef3f7;border-radius:9px;"></div>
<div class="b" style="left:2610.0px;top:587.0px;width:36.0px;height:35.5px;background:#eef3f7;border-radius:9px;"></div>
<svg class="i" style="left:2619.4px;top:593.0px;width:17.1px;height:20.7px;color:#0c1129;stroke-width:1.7;" viewBox="0 0 24 24" preserveAspectRatio="none"><path d="M1 5h22M8 5V2.500Q8 1 9.500 1h5Q16 1 16 2.500V5M3.500 5V21Q3.500 23 5.500 23H18.500Q20.500 23 20.500 21V5M9.500 10v8M14.500 10v8" fill="none" stroke="currentColor" stroke-linecap="round" stroke-linejoin="round" vector-effect="non-scaling-stroke" /></svg>
<svg class="i" style="left:2313.2px;top:656.7px;width:16.1px;height:16.1px;color:#1b6ec2;stroke-width:1.7;" viewBox="0 0 24 24" preserveAspectRatio="none"><path d="M12 1v22M1 12h22" fill="none" stroke="currentColor" stroke-linecap="round" stroke-linejoin="round" vector-effect="non-scaling-stroke" /></svg>
<span class="t" style="left:2341.0px;top:656px;font-size:21.5px;line-height:21.5px;color:#1b6ec2;letter-spacing:0.49px;">Option</span>
<span class="t" style="left:2311.0px;top:726px;font-size:18.5px;line-height:18.5px;color:#0c1129;letter-spacing:0.40px;">Belongs to</span>
<svg class="i" style="left:2412px;top:724.500px;width:18.5px;height:18.5px" viewBox="0 0 24 24"><path fill-rule="evenodd" fill="#cfdd6e" d="M23.300 0.500C17 0.500 10.500 3 6.800 8.300L3.800 13.800L11 20.800L15.500 18C21 14 23.500 7 23.300 0.500ZM13.400 8a1.900 1.900 0 1 0 .01 0ZM1 7.500L4.500 3.500Q7 2 9.500 2.200L3.500 9.500ZM14.500 21L21.700 14.500Q22 17.500 20.500 20L17 23.500ZM0.300 23.700Q0.300 19 3 17.500L6.500 21Q5 23.700 0.300 23.700Z"/></svg>
<span class="t" style="left:2439.5px;top:726px;font-size:18.5px;line-height:18.5px;color:#0c1129;letter-spacing:1.16px;-webkit-text-stroke:1.0px #0c1129;">Lightspeed</span>
<svg class="i" style="left:2550.1px;top:723.1px;width:18.3px;height:18.3px;color:#0c1129;stroke-width:1.7;" viewBox="0 0 24 24" preserveAspectRatio="none"><path d="M16 2Q18 0 20 2L22 4Q24 6 22 8L8 22L1 23L2 16zM13.500 4.500l6 6" fill="none" stroke="currentColor" stroke-linecap="round" stroke-linejoin="round" vector-effect="non-scaling-stroke" /></svg>
<span class="t" style="left:2311.0px;top:769px;font-size:18.5px;line-height:18.5px;color:#0c1129;letter-spacing:0.66px;">Applies to tasks, projects, folders</span>
<svg class="i" style="left:2617.2px;top:774.9px;width:9.6px;height:4.7px;color:#0c1129;stroke-width:2.2;" viewBox="0 0 24 24" preserveAspectRatio="none"><path d="M1 1L12 23L23 1" fill="none" stroke="currentColor" stroke-linecap="round" stroke-linejoin="round" vector-effect="non-scaling-stroke" /></svg>
<div class="b" style="left:2310.2px;top:832.0px;width:115.8px;height:48.5px;background:#08875f;border-radius:11px;"></div>
<span class="t" style="left:2335.6px;top:847px;font-size:21.5px;line-height:21.5px;color:#ffffff;letter-spacing:0.05px;">Create</span>
<span class="t" style="left:2450.0px;top:847px;font-size:21.5px;line-height:21.5px;color:#0c1129;letter-spacing:0.17px;">Cancel</span>
</aside>
<nav class="sidebar">
<svg class="i" style="left:0;top:0;width:450px;height:60px" viewBox="0 0 450 60"><path d="M11.900 24.800H24.500Q25.500 24.800 26.200 25.500L37.700 36.700L30.400 44.300Z" fill="#08cf65"/><path d="M34 26.100L43.800 16.600Q44.600 15.900 45.600 15.900H59.100L40.600 33Z" fill="#08cf65"/></svg>
<span class="t" style="left:64.0px;top:15px;font-size:30px;line-height:30px;color:#ffffff;letter-spacing:1.43px;font-weight:700;font-family:'DejaVu Sans',sans-serif;">wrike</span>
<svg class="i" style="left:219px;top:13px;width:28px;height:40px" viewBox="0 0 28 40"><path d="M2.500 2.500V32.500L9.500 26L14.500 37L19 35L14 24.500H23.500Z" fill="#000" stroke="#fff" stroke-width="2" stroke-linejoin="round"/></svg>
<svg class="i" style="left:281.3px;top:20.9px;width:19.2px;height:19.0px;color:#ffffff;stroke-width:1.9;" viewBox="0 0 24 24" preserveAspectRatio="none"><path d="M10.5 1.5a9 9 0 1 0 0 18a9 9 0 1 0 0-18zM17 17l6 6" fill="none" stroke="currentColor" stroke-linecap="round" stroke-linejoin="round" vector-effect="non-scaling-stroke" /></svg>
<svg class="i" style="left:325.2px;top:19.0px;width:17.9px;height:21.8px;color:#ffffff;stroke-width:1.8;" viewBox="0 0 24 24" preserveAspectRatio="none"><path d="M12 1v2.5M12 3.5c-4.2 0-7 3-7 7.5v5.5L2 20v1h20v-1l-3-3.500V11c0-4.500-2.800-7.500-7-7.500zM9.500 21c0 1.500 1 2.500 2.500 2.500s2.500-1 2.500-2.500" fill="none" stroke="currentColor" stroke-linecap="round" stroke-linejoin="round" vector-effect="non-scaling-stroke" /></svg>
<div class="b" style="left:339.5px;top:11.5px;width:13.0px;height:13.0px;background:#f0294a;border-radius:7px;"></div>
<svg class="i" style="left:358px;top:12px;width:36px;height:36px;border-radius:9px;overflow:hidden" viewBox="0 0 36 36"><defs><linearGradient id="avbg" x1="0" y1="0" x2="1" y2="1"><stop offset="0" stop-color="#d5d8de"/><stop offset="1" stop-color="#9aa08a"/></linearGradient></defs><rect width="36" height="36" fill="url(#avbg)"/><path d="M0 36V24Q3 19 9 19L27 19Q33 19 36 24V36Z" fill="#7d8d3c"/><path d="M8 36Q6 22 9 12Q11 1 18 1Q26 1 27.500 12Q30 22 28 36Z" fill="#a57448"/><path d="M13.500 36V24H22.500V36Z" fill="#d3a184"/><ellipse cx="18" cy="13.500" rx="5.800" ry="7.500" fill="#e6bea6"/><path d="M12 14Q11 5 18 4.500Q25 5 24 14Q22 7.500 18 7.500Q14 7.500 12 14Z" fill="#b98a5c"/><rect x="0.750" y="0.750" width="34.500" height="34.500" rx="8.500" fill="none" stroke="#34416b" stroke-width="1.5"/></svg>
<svg class="i" style="left:412.9px;top:19.9px;width:10.3px;height:20.3px;color:#ffffff;stroke-width:2;" viewBox="0 0 24 24" preserveAspectRatio="none"><path d="M23 1L1 12L23 23" fill="none" stroke="currentColor" stroke-linecap="round" stroke-linejoin="round" vector-effect="non-scaling-stroke" /></svg>
<svg class="i" style="left:51.1px;top:66.0px;width:16.3px;height:20.1px;color:#222947;stroke-width:1.6;" viewBox="0 0 24 24" preserveAspectRatio="none"><path d="M7 3H3Q1 3 1 5V21Q1 23 3 23H21Q23 23 23 21V5Q23 3 21 3H17M8 1H16Q17.500 1 17.500 2.500V4Q17.500 5.500 16 5.500H8Q6.500 5.500 6.500 4V2.500Q6.500 1 8 1zM8 19v-2.500M12 19v-4.500M16 19v-7" fill="none" stroke="currentColor" stroke-linecap="round" stroke-linejoin="round" vector-effect="non-scaling-stroke" /></svg>
<span class="t" style="left:85.0px;top:65px;font-size:21.5px;line-height:21.5px;color:#222947;letter-spacing:0.37px;">Active tasks by assignee</span>
<div class="b" style="left:0.0px;top:58.0px;width:450.0px;height:26.0px;background:linear-gradient(#191e39 45%,rgba(25,30,57,0));"></div>
<div class="b" style="left:131.0px;top:78.0px;width:174.5px;height:36.0px;background:#f0294a;border-radius:18px;"></div>
<svg class="i" style="left:151.5px;top:86.7px;width:10.6px;height:17.7px;color:#ffffff;stroke-width:1.8;" viewBox="0 0 24 24" preserveAspectRatio="none"><path d="M12 23V1M1 11L12 1L23 11" fill="none" stroke="currentColor" stroke-linecap="round" stroke-linejoin="round" vector-effect="non-scaling-stroke" /></svg>
<span class="t" style="left:173.5px;top:88px;font-size:18.5px;line-height:18.5px;color:#ffffff;letter-spacing:0.62px;">1 notification</span>
<div class="b" style="left:0.0px;top:122.0px;width:448.0px;height:2.0px;background:#2d3960;"></div>
<span class="t" style="left:12.5px;top:162px;font-size:21.5px;line-height:21.5px;color:#a9afc4;letter-spacing:0.01px;">Space</span>
<svg class="i" style="left:399.5px;top:168.5px;width:19.5px;height:6.0px;color:#a9afc4;stroke-width:0;height:19.5px;top:161.500px" viewBox="0 0 24 24" preserveAspectRatio="none"><path d="M3 9a3 3 0 1 0 .01 0zM12 9a3 3 0 1 0 .01 0zM21 9a3 3 0 1 0 .01 0z" fill="currentColor" stroke="none" /></svg>
<div class="b" style="left:1.0px;top:194.5px;width:435.0px;height:47.5px;border-radius:13px;border:2px solid #2c3659;"></div>
<svg class="i" style="left:16.500px;top:209.500px;width:19px;height:19px" viewBox="0 0 24 24"><path fill-rule="evenodd" fill="#cfdd6e" d="M23.300 0.500C17 0.500 10.500 3 6.800 8.300L3.800 13.800L11 20.800L15.500 18C21 14 23.500 7 23.300 0.500ZM13.400 8a1.900 1.900 0 1 0 .01 0ZM1 7.500L4.500 3.500Q7 2 9.500 2.200L3.500 9.500ZM14.500 21L21.700 14.500Q22 17.500 20.500 20L17 23.500ZM0.300 23.700Q0.300 19 3 17.500L6.500 21Q5 23.700 0.300 23.700Z"/></svg>
<span class="t" style="left:50.0px;top:209px;font-size:21.5px;line-height:21.5px;color:#ffffff;letter-spacing:0.61px;">Lightspeed</span>
<svg class="i" style="left:404.3px;top:216.1px;width:11.3px;height:5.9px;color:#c7cbdb;stroke-width:1.6;" viewBox="0 0 24 24" preserveAspectRatio="none"><path d="M1 1L12 23L23 1" fill="none" stroke="currentColor" stroke-linecap="round" stroke-linejoin="round" vector-effect="non-scaling-stroke" /></svg>
<svg class="i" style="left:12.4px;top:268.5px;width:21.7px;height:19.0px;color:#c7cbdb;stroke-width:1.6;" viewBox="0 0 24 24" preserveAspectRatio="none"><path d="M1 12h13M9 6.500l5.500 5.500L9 17.500M8.500 5L12.500 1L23 12L12.500 23L8.500 19" fill="none" stroke="currentColor" stroke-linecap="round" stroke-linejoin="round" vector-effect="non-scaling-stroke" /></svg>
<span class="t" style="left:49.0px;top:267px;font-size:21.5px;line-height:21.5px;color:#ffffff;letter-spacing:0.25px;">Space overview</span>
<svg class="i" style="left:399.4px;top:267.9px;width:21.2px;height:20.6px;color:#c7cbdb;stroke-width:1.6;" viewBox="0 0 24 24" preserveAspectRatio="none"><path d="M12 8a4 4 0 1 0 0 8a4 4 0 1 0 0-8zM10 1h4l.7 3.200l2.300 1.300l3.100-1l2 3.500l-2.400 2.200v2.600l2.400 2.200l-2 3.500l-3.100-1l-2.300 1.300L14 23h-4l-.7-3.200l-2.300-1.300l-3.100 1l-2-3.500l2.400-2.200v-2.600L1.900 8l2-3.500l3.100 1l2.300-1.300z" fill="none" stroke="currentColor" stroke-linecap="round" stroke-linejoin="round" vector-effect="non-scaling-stroke" /></svg>
<svg class="i" style="left:18.3px;top:335.8px;width:11.3px;height:5.9px;color:#a9afc4;stroke-width:1.6;" viewBox="0 0 24 24" preserveAspectRatio="none"><path d="M1 1L12 23L23 1" fill="none" stroke="currentColor" stroke-linecap="round" stroke-linejoin="round" vector-effect="non-scaling-stroke" /></svg>
<span class="t" style="left:49.0px;top:327px;font-size:21.5px;line-height:21.5px;color:#a9afc4;letter-spacing:0.20px;">Tools</span>
<svg class="i" style="left:401.1px;top:329.3px;width:16.3px;height:16.3px;color:#c7cbdb;stroke-width:1.6;" viewBox="0 0 24 24" preserveAspectRatio="none"><path d="M12 1v22M1 12h22" fill="none" stroke="currentColor" stroke-linecap="round" stroke-linejoin="round" vector-effect="non-scaling-stroke" /></svg>
<svg class="i" style="left:51.1px;top:375.0px;width:16.3px;height:20.1px;color:#b6bbce;stroke-width:1.6;" viewBox="0 0 24 24" preserveAspectRatio="none"><path d="M7 3H3Q1 3 1 5V21Q1 23 3 23H21Q23 23 23 21V5Q23 3 21 3H17M8 1H16Q17.500 1 17.500 2.500V4Q17.500 5.500 16 5.500H8Q6.500 5.500 6.500 4V2.500Q6.500 1 8 1zM8 19v-2.500M12 19v-4.500M16 19v-7" fill="none" stroke="currentColor" stroke-linecap="round" stroke-linejoin="round" vector-effect="non-scaling-stroke" /></svg>
<span class="t" style="left:84.7px;top:375px;font-size:21.5px;line-height:21.5px;color:#ffffff;letter-spacing:0.38px;">Active tasks by assignee</span>
<svg class="i" style="left:49.4px;top:425.1px;width:20.9px;height:16.5px;color:#b6bbce;stroke-width:1.5;" viewBox="0 0 24 24" preserveAspectRatio="none"><path d="M14.500 1H20.500Q23 1 23 3.500Q23 6 20.500 6H14.500Q12 6 12 3.500Q12 1 14.500 1zM11 9.500H16Q18.500 9.500 18.500 12Q18.500 14.500 16 14.500H11Q8.500 14.500 8.500 12Q8.500 9.500 11 9.500zM16 18H19.500Q22 18 22 20.500Q22 23 19.500 23H16Q13.500 23 13.500 20.500Q13.500 18 16 18zM3 1.500a2 2.200 0 1 0 .01 0zM3 9.800a2 2.200 0 1 0 .01 0zM3 18.300a2 2.200 0 1 0 .01 0z" fill="none" stroke="currentColor" stroke-linecap="round" stroke-linejoin="round" vector-effect="non-scaling-stroke" /></svg>
<span class="t" style="left:84.7px;top:423px;font-size:21.5px;line-height:21.5px;color:#ffffff;letter-spacing:0.53px;">Allocation</span>
<svg class="i" style="left:49.5px;top:473.0px;width:19.5px;height:19.5px;color:#b6bbce;stroke-width:1.6;" viewBox="0 0 24 24" preserveAspectRatio="none"><path d="M3 1H21Q23 1 23 3V21Q23 23 21 23H3Q1 23 1 21V3Q1 1 3 1zM12 1v22M1 12.500h11" fill="none" stroke="currentColor" stroke-linecap="round" stroke-linejoin="round" vector-effect="non-scaling-stroke" /></svg>
<span class="t" style="left:84.7px;top:471px;font-size:21.5px;line-height:21.5px;color:#ffffff;letter-spacing:0.44px;">Community Training Dashboard</span>
<svg class="i" style="left:49.4px;top:521.1px;width:20.9px;height:16.5px;color:#b6bbce;stroke-width:1.5;" viewBox="0 0 24 24" preserveAspectRatio="none"><path d="M14.500 1H20.500Q23 1 23 3.500Q23 6 20.500 6H14.500Q12 6 12 3.500Q12 1 14.500 1zM11 9.500H16Q18.500 9.500 18.500 12Q18.500 14.500 16 14.500H11Q8.500 14.500 8.500 12Q8.500 9.500 11 9.500zM16 18H19.500Q22 18 22 20.500Q22 23 19.500 23H16Q13.500 23 13.500 20.500Q13.500 18 16 18zM3 1.500a2 2.200 0 1 0 .01 0zM3 9.800a2 2.200 0 1 0 .01 0zM3 18.300a2 2.200 0 1 0 .01 0z" fill="none" stroke="currentColor" stroke-linecap="round" stroke-linejoin="round" vector-effect="non-scaling-stroke" /></svg>
<span class="t" style="left:84.7px;top:519px;font-size:21.5px;line-height:21.5px;color:#ffffff;letter-spacing:0.46px;">Community Workload</span>
<svg class="i" style="left:51.1px;top:567.3px;width:17.9px;height:19.5px;color:#b6bbce;stroke-width:1.6;" viewBox="0 0 24 24" preserveAspectRatio="none"><path d="M3 4H21Q23 4 23 6V21Q23 23 21 23H3Q1 23 1 21V6Q1 4 3 4zM1 10h22M7 1v5M17 1v5" fill="none" stroke="currentColor" stroke-linecap="round" stroke-linejoin="round" vector-effect="non-scaling-stroke" /></svg>
<span class="t" style="left:84.7px;top:567px;font-size:21.5px;line-height:21.5px;color:#ffffff;letter-spacing:0.48px;">Lightspeed Calendar</span>
<svg class="i" style="left:49.5px;top:617.0px;width:19.5px;height:19.5px;color:#b6bbce;stroke-width:1.6;" viewBox="0 0 24 24" preserveAspectRatio="none"><path d="M3 1H21Q23 1 23 3V21Q23 23 21 23H3Q1 23 1 21V3Q1 1 3 1zM12 1v22M1 12.500h11" fill="none" stroke="currentColor" stroke-linecap="round" stroke-linejoin="round" vector-effect="non-scaling-stroke" /></svg>
<span class="t" style="left:84.7px;top:615px;font-size:21.5px;line-height:21.5px;color:#ffffff;letter-spacing:0.54px;">Multiple spaces dashboards</span>
<svg class="i" style="left:49.5px;top:665.0px;width:19.5px;height:19.5px;color:#b6bbce;stroke-width:1.6;" viewBox="0 0 24 24" preserveAspectRatio="none"><path d="M3 1H21Q23 1 23 3V21Q23 23 21 23H3Q1 23 1 21V3Q1 1 3 1zM12 1v22M1 12.500h11" fill="none" stroke="currentColor" stroke-linecap="round" stroke-linejoin="round" vector-effect="non-scaling-stroke" /></svg>
<span class="t" style="left:84.7px;top:663px;font-size:21.5px;line-height:21.5px;color:#ffffff;letter-spacing:0.41px;">New dashboard</span>
<svg class="i" style="left:49.5px;top:713.0px;width:19.5px;height:19.5px;color:#b6bbce;stroke-width:1.6;" viewBox="0 0 24 24" preserveAspectRatio="none"><path d="M3 1H21Q23 1 23 3V21Q23 23 21 23H3Q1 23 1 21V3Q1 1 3 1zM12 1v22M1 12.500h11" fill="none" stroke="currentColor" stroke-linecap="round" stroke-linejoin="round" vector-effect="non-scaling-stroke" /></svg>
<span class="t" style="left:84.7px;top:711px;font-size:21.5px;line-height:21.5px;color:#ffffff;letter-spacing:0.41px;">New dashboard</span>
<svg class="i" style="left:49.5px;top:761.0px;width:19.5px;height:19.5px;color:#b6bbce;stroke-width:1.6;" viewBox="0 0 24 24" preserveAspectRatio="none"><path d="M3 1H21Q23 1 23 3V21Q23 23 21 23H3Q1 23 1 21V3Q1 1 3 1zM12 1v22M1 12.500h11" fill="none" stroke="currentColor" stroke-linecap="round" stroke-linejoin="round" vector-effect="non-scaling-stroke" /></svg>
<span class="t" style="left:84.7px;top:759px;font-size:21.5px;line-height:21.5px;color:#ffffff;letter-spacing:0.52px;">Test</span>
<svg class="i" style="left:51.1px;top:807.3px;width:17.9px;height:19.5px;color:#b6bbce;stroke-width:1.6;" viewBox="0 0 24 24" preserveAspectRatio="none"><path d="M3 4H21Q23 4 23 6V21Q23 23 21 23H3Q1 23 1 21V6Q1 4 3 4zM1 10h22M7 1v5M17 1v5" fill="none" stroke="currentColor" stroke-linecap="round" stroke-linejoin="round" vector-effect="non-scaling-stroke" /></svg>
<span class="t" style="left:84.7px;top:807px;font-size:21.5px;line-height:21.5px;color:#ffffff;letter-spacing:0.52px;">Test</span>
<svg class="i" style="left:18.3px;top:876.1px;width:11.3px;height:5.9px;color:#a9afc4;stroke-width:1.6;" viewBox="0 0 24 24" preserveAspectRatio="none"><path d="M1 1L12 23L23 1" fill="none" stroke="currentColor" stroke-linecap="round" stroke-linejoin="round" vector-effect="non-scaling-stroke" /></svg>
<span class="t" style="left:49.0px;top:867px;font-size:21.5px;line-height:21.5px;color:#a9afc4;letter-spacing:0.53px;">Projects and folders</span>
<svg class="i" style="left:401.1px;top:869.6px;width:16.3px;height:16.3px;color:#c7cbdb;stroke-width:1.6;" viewBox="0 0 24 24" preserveAspectRatio="none"><path d="M12 1v22M1 12h22" fill="none" stroke="currentColor" stroke-linecap="round" stroke-linejoin="round" vector-effect="non-scaling-stroke" /></svg>
<svg class="i" style="left:22.6px;top:921.3px;width:5.0px;height:11.3px;color:#aab0c6;stroke-width:1.6;" viewBox="0 0 24 24" preserveAspectRatio="none"><path d="M1 1L23 12L1 23" fill="none" stroke="currentColor" stroke-linecap="round" stroke-linejoin="round" vector-effect="non-scaling-stroke" /></svg>
<svg class="i" style="left:49.4px;top:916.3px;width:21.2px;height:16.3px;color:#b6bbce;stroke-width:1.6;" viewBox="0 0 24 24" preserveAspectRatio="none"><path d="M1 3.500Q1 1 3.500 1H8.500Q10 1 10.500 2L12 5H20.500Q23 5 23 7.500V20.500Q23 23 20.500 23H3.500Q1 23 1 20.500zM1 8h11.500L12 5" fill="none" stroke="currentColor" stroke-linecap="round" stroke-linejoin="round" vector-effect="non-scaling-stroke" /></svg>
<span class="t" style="left:84.5px;top:916px;font-size:21.5px;line-height:21.5px;color:#ffffff;letter-spacing:0.67px;">Gantt Chart sorting testing</span>
<svg class="i" style="left:22.6px;top:969.3px;width:5.0px;height:11.3px;color:#aab0c6;stroke-width:1.6;" viewBox="0 0 24 24" preserveAspectRatio="none"><path d="M1 1L23 12L1 23" fill="none" stroke="currentColor" stroke-linecap="round" stroke-linejoin="round" vector-effect="non-scaling-stroke" /></svg>
<svg class="i" style="left:51.3px;top:961.4px;width:16.1px;height:20.8px;color:#b6bbce;stroke-width:1.6;" viewBox="0 0 24 24" preserveAspectRatio="none"><path d="M6.500 3H3.500Q1 3 1 5.500V20.500Q1 23 3.500 23H20.500Q23 23 23 20.500V5.500Q23 3 20.500 3H17.500M8 1H16Q17.500 1 17.500 2.500V4Q17.500 5.500 16 5.500H8Q6.500 5.500 6.500 4V2.500Q6.500 1 8 1zM6 11.500h12M6 15.500h12" fill="none" stroke="currentColor" stroke-linecap="round" stroke-linejoin="round" vector-effect="non-scaling-stroke" /></svg>
<span class="t" style="left:84.5px;top:964px;font-size:21.5px;line-height:21.5px;color:#ffffff;letter-spacing:0.67px;">Gantt Chart sorting testing 2</span>
<svg class="i" style="left:22.6px;top:1017.3px;width:5.0px;height:11.3px;color:#aab0c6;stroke-width:1.6;" viewBox="0 0 24 24" preserveAspectRatio="none"><path d="M1 1L23 12L1 23" fill="none" stroke="currentColor" stroke-linecap="round" stroke-linejoin="round" vector-effect="non-scaling-stroke" /></svg>
<svg class="i" style="left:49.4px;top:1012.3px;width:21.2px;height:16.3px;color:#b6bbce;stroke-width:1.6;" viewBox="0 0 24 24" preserveAspectRatio="none"><path d="M1 3.500Q1 1 3.500 1H8.500Q10 1 10.500 2L12 5H20.500Q23 5 23 7.500V20.500Q23 23 20.500 23H3.500Q1 23 1 20.500zM1 8h11.500L12 5" fill="none" stroke="currentColor" stroke-linecap="round" stroke-linejoin="round" vector-effect="non-scaling-stroke" /></svg>
<span class="t" style="left:84.5px;top:1012px;font-size:21.5px;line-height:21.5px;color:#ffffff;letter-spacing:0.38px;">New Board View Use-Case</span>
<div class="b" style="left:0.0px;top:1045.5px;width:436.0px;height:49.0px;background:#323d63;border-radius:13px;"></div>
<svg class="i" style="left:22.6px;top:1065.3px;width:5.0px;height:11.3px;color:#aab0c6;stroke-width:1.6;" viewBox="0 0 24 24" preserveAspectRatio="none"><path d="M1 1L23 12L1 23" fill="none" stroke="currentColor" stroke-linecap="round" stroke-linejoin="round" vector-effect="non-scaling-stroke" /></svg>
<svg class="i" style="left:49.4px;top:1060.3px;width:21.2px;height:16.3px;color:#f4b63f;stroke-width:1.6;" viewBox="0 0 24 24" preserveAspectRatio="none"><path d="M1 3.500Q1 1 3.500 1H8.500Q10 1 10.500 2L12 5H20.500Q23 5 23 7.500V20.500Q23 23 20.500 23H3.500Q1 23 1 20.500zM1 8h11.500L12 5" fill="none" stroke="currentColor" stroke-linecap="round" stroke-linejoin="round" vector-effect="non-scaling-stroke" /></svg>
<span class="t" style="left:84.5px;top:1060px;font-size:21.5px;line-height:21.5px;color:#ffffff;letter-spacing:0.42px;">New Table View Use-Case</span>
<svg class="i" style="left:22.6px;top:1113.3px;width:5.0px;height:11.3px;color:#aab0c6;stroke-width:1.6;" viewBox="0 0 24 24" preserveAspectRatio="none"><path d="M1 1L23 12L1 23" fill="none" stroke="currentColor" stroke-linecap="round" stroke-linejoin="round" vector-effect="non-scaling-stroke" /></svg>
<svg class="i" style="left:49.4px;top:1108.3px;width:21.2px;height:16.3px;color:#b6bbce;stroke-width:1.6;" viewBox="0 0 24 24" preserveAspectRatio="none"><path d="M1 3.500Q1 1 3.500 1H8.500Q10 1 10.500 2L12 5H20.500Q23 5 23 7.500V20.500Q23 23 20.500 23H3.500Q1 23 1 20.500zM1 8h11.500L12 5" fill="none" stroke="currentColor" stroke-linecap="round" stroke-linejoin="round" vector-effect="non-scaling-stroke" /></svg>
<span class="t" style="left:84.5px;top:1108px;font-size:21.5px;line-height:21.5px;color:#ffffff;letter-spacing:0.47px;">Parent folder</span>
<svg class="i" style="left:51.3px;top:1153.4px;width:16.1px;height:20.8px;color:#b6bbce;stroke-width:1.6;" viewBox="0 0 24 24" preserveAspectRatio="none"><path d="M6.500 3H3.500Q1 3 1 5.500V20.500Q1 23 3.500 23H20.500Q23 23 23 20.500V5.500Q23 3 20.500 3H17.500M8 1H16Q17.500 1 17.500 2.500V4Q17.500 5.500 16 5.500H8Q6.500 5.500 6.500 4V2.500Q6.500 1 8 1zM6 11.500h12M6 15.500h12" fill="none" stroke="currentColor" stroke-linecap="round" stroke-linejoin="round" vector-effect="non-scaling-stroke" /></svg>
<span class="t" style="left:84.5px;top:1156px;font-size:21.5px;line-height:21.5px;color:#ffffff;letter-spacing:0.57px;">Project A</span>
<svg class="i" style="left:51.3px;top:1201.4px;width:16.1px;height:20.8px;color:#b6bbce;stroke-width:1.6;" viewBox="0 0 24 24" preserveAspectRatio="none"><path d="M6.500 3H3.500Q1 3 1 5.500V20.500Q1 23 3.500 23H20.500Q23 23 23 20.500V5.500Q23 3 20.500 3H17.500M8 1H16Q17.500 1 17.500 2.500V4Q17.500 5.500 16 5.500H8Q6.500 5.500 6.500 4V2.500Q6.500 1 8 1zM6 11.500h12M6 15.500h12" fill="none" stroke="currentColor" stroke-linecap="round" stroke-linejoin="round" vector-effect="non-scaling-stroke" /></svg>
<span class="t" style="left:84.5px;top:1204px;font-size:21.5px;line-height:21.5px;color:#ffffff;letter-spacing:0.42px;">Project B</span>
<svg class="i" style="left:22.6px;top:1257.3px;width:5.0px;height:11.3px;color:#aab0c6;stroke-width:1.6;" viewBox="0 0 24 24" preserveAspectRatio="none"><path d="M1 1L23 12L1 23" fill="none" stroke="currentColor" stroke-linecap="round" stroke-linejoin="round" vector-effect="non-scaling-stroke" /></svg>
<svg class="i" style="left:51.3px;top:1249.4px;width:16.1px;height:20.8px;color:#b6bbce;stroke-width:1.6;" viewBox="0 0 24 24" preserveAspectRatio="none"><path d="M6.500 3H3.500Q1 3 1 5.500V20.500Q1 23 3.500 23H20.500Q23 23 23 20.500V5.500Q23 3 20.500 3H17.500M8 1H16Q17.500 1 17.500 2.500V4Q17.500 5.500 16 5.500H8Q6.500 5.500 6.500 4V2.500Q6.500 1 8 1zM6 11.500h12M6 15.500h12" fill="none" stroke="currentColor" stroke-linecap="round" stroke-linejoin="round" vector-effect="non-scaling-stroke" /></svg>
<span class="t" style="left:84.5px;top:1252px;font-size:21.5px;line-height:21.5px;color:#ffffff;letter-spacing:0.46px;">Project with 2 CITS</span>
<svg class="i" style="left:51.3px;top:1297.4px;width:16.1px;height:20.8px;color:#b6bbce;stroke-width:1.6;" viewBox="0 0 24 24" preserveAspectRatio="none"><path d="M6.500 3H3.500Q1 3 1 5.500V20.500Q1 23 3.500 23H20.500Q23 23 23 20.500V5.500Q23 3 20.500 3H17.500M8 1H16Q17.500 1 17.500 2.500V4Q17.500 5.500 16 5.500H8Q6.500 5.500 6.500 4V2.500Q6.500 1 8 1zM6 11.500h12M6 15.500h12" fill="none" stroke="currentColor" stroke-linecap="round" stroke-linejoin="round" vector-effect="non-scaling-stroke" /></svg>
<span class="t" style="left:84.5px;top:1300px;font-size:21.5px;line-height:21.5px;color:#ffffff;letter-spacing:0.50px;">Project_no_tasks</span>
<div class="b" style="left:0.0px;top:1369.0px;width:448.0px;height:2.0px;background:#2d3960;"></div>
<div class="b" style="left:24.0px;top:1382.5px;width:387.0px;height:37.5px;background:#2b3659;border-radius:12px;"></div>
<div class="b" style="left:447.5px;top:0.0px;width:2.5px;height:1388.0px;background:#273660;"></div>
</nav>
</body>
</html>
